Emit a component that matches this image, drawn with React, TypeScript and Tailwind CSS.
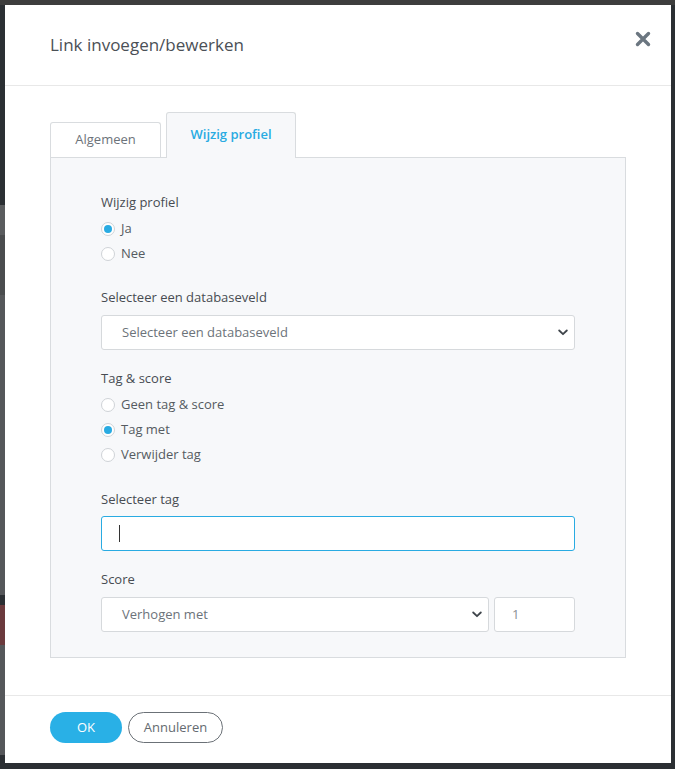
import React from 'react';

const font = { fontFamily: '"Open Sans", "Liberation Sans", sans-serif' };

function Radio({ label, checked }: { label: string; checked?: boolean }) {
  return (
    <div className="flex h-[25px] items-center gap-[6px]">
      <span className="flex h-[14px] w-[14px] items-center justify-center rounded-full border border-[#cfd3d7] bg-white">
        {checked && <span className="h-[8px] w-[8px] rounded-full bg-[#29abe2]" />}
      </span>
      <span className="text-[13px] text-[#555b61]">{label}</span>
    </div>
  );
}

function Chevron() {
  return (
    <svg width="10" height="7" viewBox="0 0 10 7" fill="none">
      <polyline points="1.2,1.5 5,5.2 8.8,1.5" stroke="#3f454b" strokeWidth="1.8" strokeLinecap="round" strokeLinejoin="round" />
    </svg>
  );
}

function Label({ children, className }: { children: React.ReactNode; className?: string }) {
  return <div className={`h-[20px] text-[13px] font-medium leading-[20px] text-[#474c52] ${className ?? ''}`}>{children}</div>;
}

export default function App() {
  return (
    <div className="relative h-[769px] w-[675px] overflow-hidden bg-[#2b2f33]" style={font}>
      {/* dimmed page behind the dialog */}
      <div className="absolute left-0 top-0 h-[5px] w-full bg-[#3d3d3d]" />
      <div className="absolute left-0 top-[205px] h-[30px] w-[5px] bg-[#5a5c5e]" />
      <div className="absolute left-0 top-[235px] h-[60px] w-[5px] bg-[#4a4c4e]" />
      <div className="absolute left-0 top-[295px] h-[300px] w-[5px] bg-[#55575a]" />
      <div className="absolute left-0 top-[605px] h-[40px] w-[5px] bg-[#6b3a3d]" />
      <div className="absolute left-0 top-[645px] h-[110px] w-[5px] bg-[#55575a]" />

      <div className="relative ml-[5px] mt-[5px] flex h-[758px] w-[666px] flex-col bg-white">
        <div className="flex h-[81px] items-center justify-between border-b border-[#e8e8e8] pl-[45px] pr-[20px]">
          <h1 className="text-[17px] font-normal text-[#4b5056]">Link invoegen/bewerken</h1>
          <svg width="16" height="16" viewBox="0 0 16 16" className="-mt-[12px]">
            <path d="M2.5 2.5 L13.5 13.5 M13.5 2.5 L2.5 13.5" stroke="#6b7680" strokeWidth="3.4" strokeLinecap="round" />
          </svg>
        </div>

        <div className="flex-1 px-[45px] pt-[26px]">
          <div className="relative z-10 flex items-end gap-[5px]">
            <div className="flex h-[35px] w-[111px] items-center justify-center rounded-t-[3px] border border-b-0 border-[#d9dcdf] bg-white text-[13px] text-[#6c737a]">
              Algemeen
            </div>
            <div className="-mb-px flex h-[46px] w-[130px] items-center justify-center rounded-t-[3px] border border-b-0 border-[#d9dcdf] bg-[#f7f8fa] pb-[2px] text-[13px] font-semibold text-[#29abe2]">
              Wijzig profiel
            </div>
          </div>

          <div className="flex w-[576px] flex-col border border-[#d9dcdf] bg-[#f7f8fa] px-[50px] pb-[25px] pt-[34px]">
            <Label>Wijzig profiel</Label>
            <div className="mt-[4px]">
              <Radio label="Ja" checked />
              <Radio label="Nee" />
            </div>

            <Label className="mt-[21px]">Selecteer een databaseveld</Label>
            <div className="mt-[8px] flex h-[35px] items-center justify-between rounded-[3px] border border-[#d6d9dc] bg-white pl-[20px] pr-[6px] text-[13px] text-[#6c737a]">
              <span>Selecteer een databaseveld</span>
              <Chevron />
            </div>

            <Label className="mt-[18px]">Tag &amp; score</Label>
            <div className="mt-[4px]">
              <Radio label="Geen tag & score" />
              <Radio label="Tag met" checked />
              <Radio label="Verwijder tag" />
            </div>

            <Label className="mt-[22px]">Selecteer tag</Label>
            <div className="mt-[7px] flex h-[35px] items-center rounded-[3px] border border-[#29abe2] bg-white pl-[17px]">
              <span className="h-[17px] w-px bg-[#333]" />
            </div>

            <Label className="mt-[18px]">Score</Label>
            <div className="mt-[8px] flex gap-[5px]">
              <div className="flex h-[35px] flex-1 items-center justify-between rounded-[3px] border border-[#d6d9dc] bg-white pl-[20px] pr-[6px] text-[13px] text-[#6c737a]">
                <span>Verhogen met</span>
                <Chevron />
              </div>
              <div className="flex h-[35px] w-[81px] items-center rounded-[3px] border border-[#d6d9dc] bg-white pl-[17px] text-[13px] text-[#8a9096]">
                1
              </div>
            </div>
          </div>
        </div>

        <div className="flex h-[68px] items-center gap-[6px] border-t border-[#e8e8e8] px-[45px] pb-[4px]">
          <button className="h-[31px] w-[72px] rounded-full bg-[#29b0e6] text-[13px] text-white">OK</button>
          <button className="h-[31px] w-[95px] rounded-full border border-[#6b7177] bg-white text-[13px] text-[#646a70]">Annuleren</button>
        </div>
      </div>
    </div>
  );
}
